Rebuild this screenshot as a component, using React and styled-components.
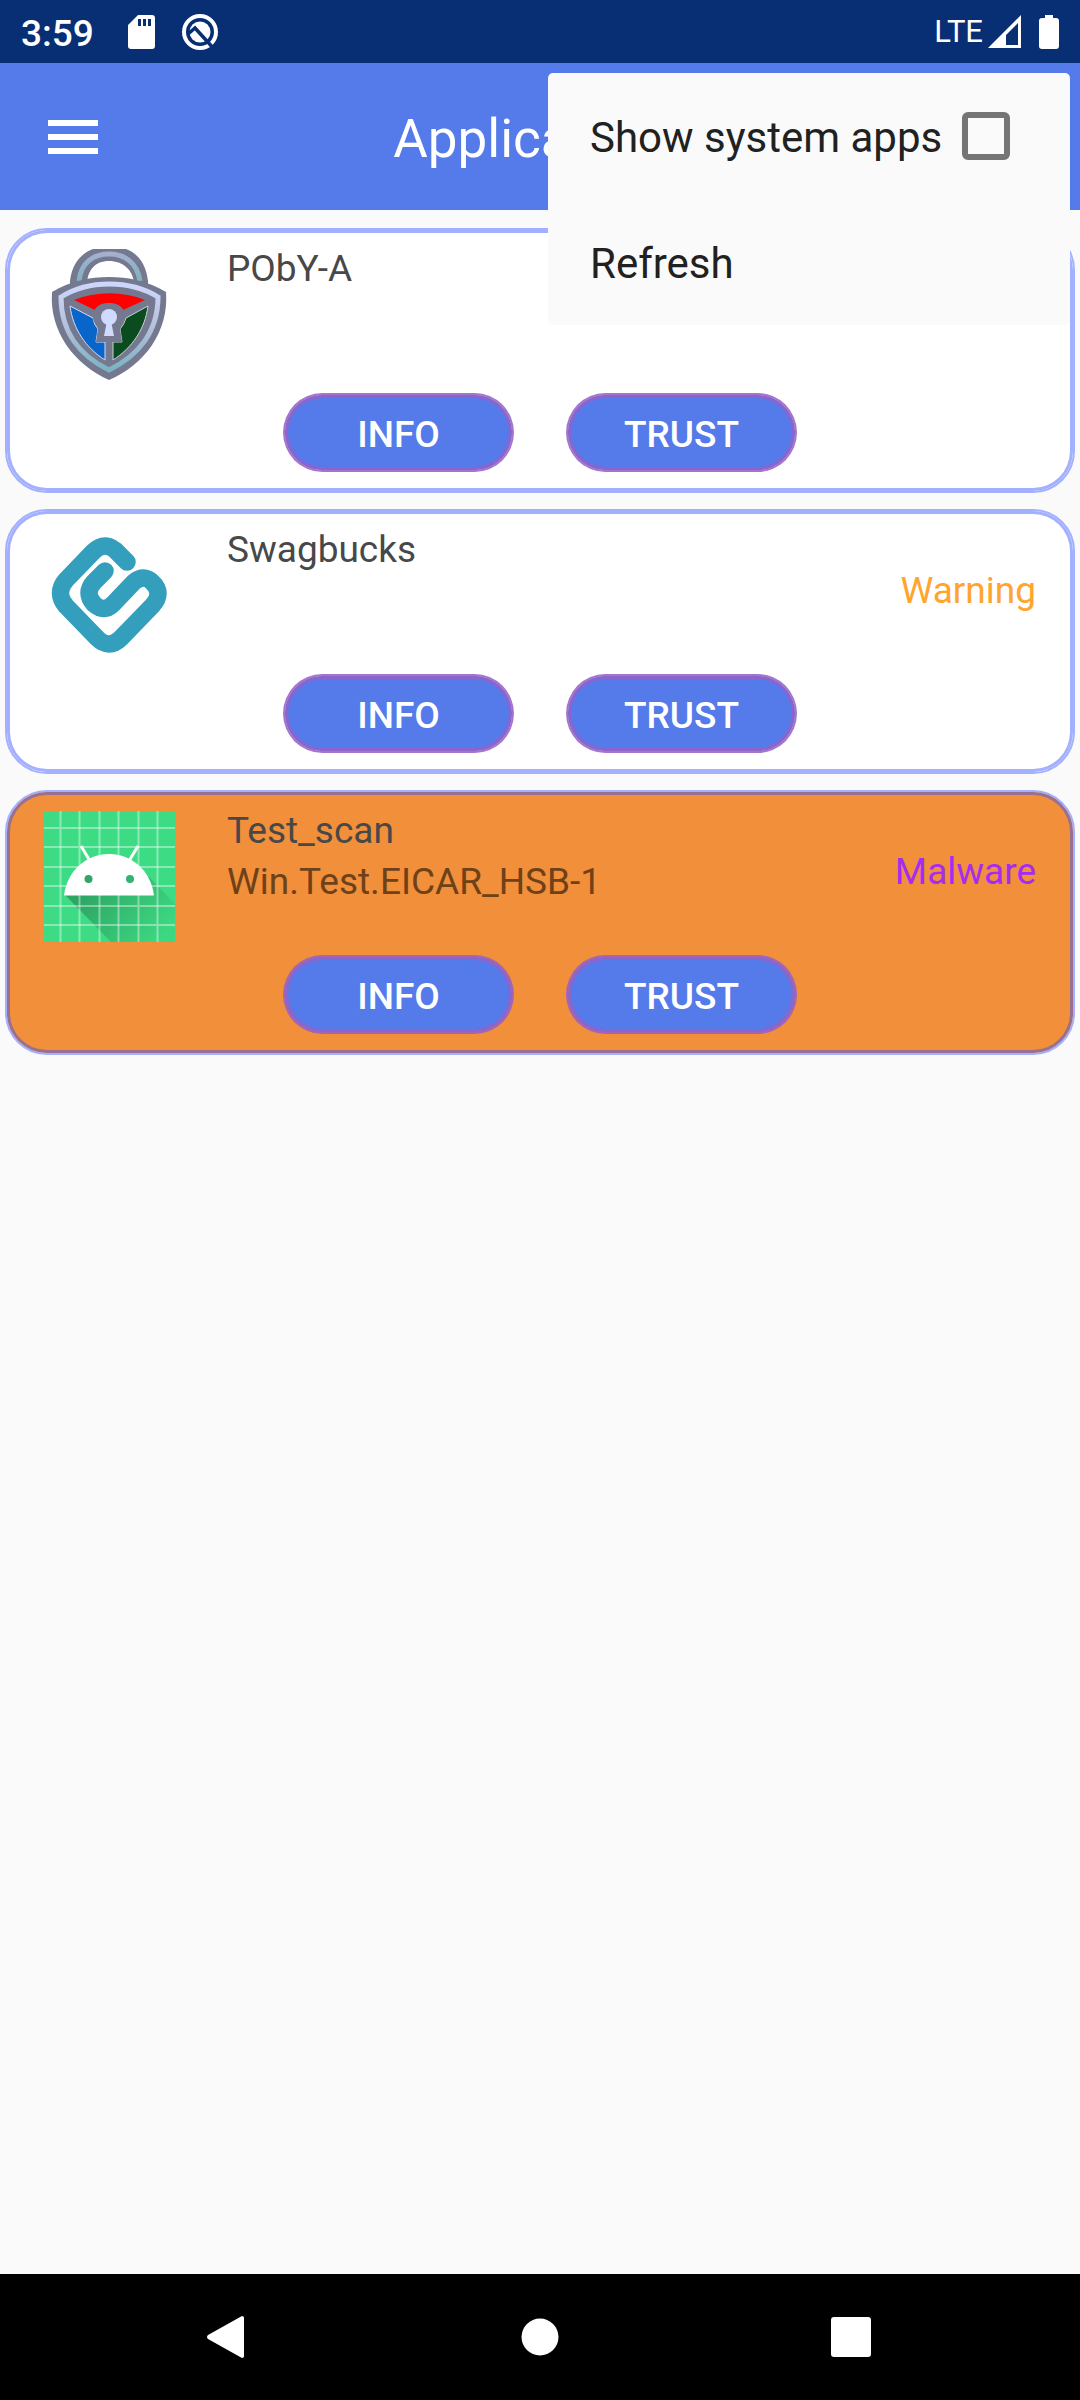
import React from "react";
import styled, { createGlobalStyle } from "styled-components";

const GlobalStyle = createGlobalStyle`
  *, *::before, *::after { box-sizing: border-box; }
  html { height: 100%; }
  body {
    margin: 0;
    min-height: 100%;
    background: #fafafa;
    font-family: Roboto, "Liberation Sans", sans-serif;
  }
  button { font: inherit; cursor: pointer; }
`;

const Screen = styled.div`
  min-height: 100vh;
  display: flex;
  flex-direction: column;
  background: #fafafa;
`;

const StatusBar = styled.div`
  height: 63px;
  flex: none;
  display: flex;
  align-items: center;
  justify-content: space-between;
  padding: 0 21px;
  background: #082e73;
  color: #fff;
`;

const StatusGroup = styled.div`
  display: flex;
  align-items: center;
  gap: ${(p) => p.$gap}px;
`;

const Clock = styled.span`
  font-size: 37px;
  line-height: 44px;
  font-weight: 500;
  padding-top: 4px;
`;

const Network = styled.span`
  font-size: 31px;
  line-height: 40px;
`;

const Glyph = styled.svg`
  display: block;
  flex: none;
  width: ${(p) => p.$w}px;
  height: ${(p) => p.$h}px;
`;

const AppBar = styled.header`
  position: relative;
  height: 147px;
  flex: none;
  display: grid;
  grid-template-columns: 147px 1fr 147px;
  align-items: center;
  background: #557aea;
  color: #fff;
`;

const MenuButton = styled.button`
  width: 146px;
  height: 146px;
  display: grid;
  place-items: center;
  padding: 0;
  border: 0;
  background: none;
  color: inherit;
`;

const Title = styled.h1`
  margin: 0;
  padding-top: 4px;
  text-align: center;
  font-size: 53px;
  line-height: 64px;
  font-weight: 400;
`;

const Popup = styled.div`
  position: absolute;
  z-index: 2;
  top: 10px;
  right: 10px;
  width: 522px;
  border-radius: 5px;
  background: #fafafa;
  color: #212121;
`;

const popupItem = `
  width: 100%;
  height: 126px;
  display: flex;
  align-items: center;
  justify-content: space-between;
  padding: 0 60px 0 42px;
  border: 0;
  background: none;
  color: inherit;
  font-size: 42px;
  line-height: 50px;
  text-align: left;
`;

const PopupLabel = styled.label`${popupItem}`;
const PopupButton = styled.button`
  && { ${popupItem} }
`;

const PopupText = styled.span`
  padding-top: 4px;
`;

const CheckBox = styled.input`
  appearance: none;
  width: 48px;
  height: 48px;
  margin: 0;
  border: 6px solid #757575;
  border-radius: 6px;
  &:checked { background: #757575; }
`;

const List = styled.main`
  flex: 1;
  display: flex;
  flex-direction: column;
  gap: 16px;
  padding: 18px 5px;
`;

const Card = styled.article`
  height: 265px;
  display: flex;
  flex-direction: column;
  justify-content: flex-end;
  gap: 13px;
  padding: 0 37px 19px;
  border: 2px solid #a3b0ff;
  border-radius: 42px;
  box-shadow: inset 0 0 0 3px ${(p) => (p.$infected ? "#99708f" : "#a3b0ff")};
  background: ${(p) => (p.$infected ? "#f18f3a" : "#fff")};
`;

const CardTop = styled.div`
  height: 133px;
  display: flex;
  align-items: flex-start;
`;

const AppIcon = styled.svg`
  display: block;
  flex: none;
  width: 131px;
  height: 131px;
  margin: 2px 52px 0 0;
`;

const AppText = styled.div`
  flex: 1;
  display: flex;
  flex-direction: column;
  gap: 8px;
`;

const AppName = styled.h2`
  margin: 0;
  font-size: 37px;
  line-height: 43px;
  font-weight: 400;
  color: #484848;
`;

const Threat = styled.p`
  margin: 0;
  font-size: 37px;
  line-height: 43px;
  color: #6e4119;
`;

const Verdict = styled.span`
  padding-top: 41px;
  font-size: 37px;
  line-height: 43px;
  color: ${(p) => p.$color};
`;

const Actions = styled.div`
  display: flex;
  justify-content: center;
  gap: 52px;
`;

const Action = styled.button`
  width: 231px;
  height: 79px;
  padding: 4px 0 0;
  border: 2px solid rgba(148, 97, 199, 0.87);
  border-radius: 40px;
  background: #557aea;
  background-clip: padding-box;
  box-shadow: inset 0 0 0 3px rgba(148, 97, 199, 0.87);
  color: #fff;
  && { font-size: 37px; line-height: 43px; font-weight: 500; }
`;

const NavBar = styled.nav`
  height: 126px;
  flex: none;
  display: flex;
  align-items: center;
  justify-content: center;
  gap: 185px;
  background: #000;
`;

const NavButton = styled.button`
  width: 126px;
  height: 126px;
  display: grid;
  place-items: center;
  padding: 0;
  border: 0;
  background: none;
`;

function ShieldIcon() {
  return (
    <AppIcon viewBox="0 0 131 131" aria-hidden="true">
      <defs>
        <linearGradient id="steel" x1="0" y1="0" x2="0" y2="1">
          <stop offset="0" stopColor="#ced7fb" />
          <stop offset="0.5" stopColor="#b4c0dc" />
          <stop offset="1" stopColor="#7cb3c0" />
        </linearGradient>
        <linearGradient id="hoop" x1="0" y1="0" x2="0" y2="1">
          <stop offset="0" stopColor="#a4b0ce" />
          <stop offset="1" stopColor="#80b2bf" />
        </linearGradient>
      </defs>
      <path d="M26 37V32C28 14 38 4 49 0H82C93 4 102 14 104 32V37L90 34C89 21 79 12 65 12S44 21 43 34Z" fill="#747990" />
      <path d="M35 32C37 13 50 5 65 5S93 13 96 32" fill="none" stroke="url(#hoop)" strokeWidth="5" />
      <path d="M44 30C46 19 53 13 65 13S85 19 87 30Q65 26 44 30Z" fill="#fff" />
      <path d="M8 43C26 32 46 28 65 28S104 32 122 43C125 83 100 116 65 131C31 116 5 83 8 43Z" fill="#747990" />
      <path d="M17 48C33 38 49 35 65 35S98 38 114 48C114 83 94 107 65 121C36 107 17 83 17 48Z" fill="none" stroke="url(#steel)" strokeWidth="5" />
      <path d="M30 51C52 42 79 42 101 51L79 61C73 53 57 53 51 61Z" fill="#f00" />
      <path d="M26 57L49 69Q50 76 54 80L52 93H61V111C42 99 29 80 26 57Z" fill="#0865ca" stroke="#d5dcf5" strokeWidth="1" />
      <path d="M104 57L82 69Q80 76 76 80L78 93H69V111C88 99 101 80 104 57Z" fill="#0a4b20" stroke="#c5d5cc" strokeWidth="1" />
      <path d="M65 54C54 54 49 60 49 68C49 74 53 75 54 80L52 93H78L76 80C78 75 81 74 81 68C81 60 76 54 65 54Z" fill="#747990" />
      <circle cx="65" cy="68" r="8" fill="#d0dafe" />
      <path d="M63 72H67L70 87H60Z" fill="#d0dafe" />
    </AppIcon>
  );
}

function SwagIcon() {
  return (
    <AppIcon viewBox="0 0 131 131" aria-hidden="true">
      <path
        d="M83 32L75 24Q62 9 49 22L22 50Q11 63 22 76L53 108Q65 120 77 108L108 76Q120 63 108 52Q100 44 90 52L69 74Q60 83 50 74Q40 63 50 52L61 41"
        fill="none"
        stroke="#349fbc"
        strokeWidth="17.500"
        strokeLinecap="round"
        strokeLinejoin="round"
      />
    </AppIcon>
  );
}

function AndroidIcon() {
  const lines = [17, 36, 56, 75, 95, 114];
  return (
    <AppIcon viewBox="0 0 131 131" aria-hidden="true">
      <defs>
        <linearGradient id="shade" gradientUnits="userSpaceOnUse" x1="40" y1="80" x2="110" y2="135">
          <stop offset="0" stopColor="#000" stopOpacity="0.25" />
          <stop offset="1" stopColor="#000" stopOpacity="0.02" />
        </linearGradient>
      </defs>
      <rect width="131" height="131" fill="#3ddc84" />
      <path d="M21 84L67 131H131V93L105 66Z" fill="url(#shade)" />
      {lines.map((n) => (
        <path key={n} d={`M${n - 0.5} 0V131M0 ${n}H131`} stroke="#fff" strokeOpacity="0.4" strokeWidth="2" />
      ))}
      <path d="M37 35L46 50M94 35L85 50" stroke="#fff" strokeWidth="3" />
      <path d="M20 84.500C23 60 42 43 65 43S107 60 110 84.500Z" fill="#fff" />
      <circle cx="44.500" cy="68" r="4" fill="#2fa866" />
      <circle cx="86" cy="68" r="4" fill="#33b36d" />
    </AppIcon>
  );
}

const apps = [
  { name: "PObY-A", Icon: ShieldIcon },
  { name: "Swagbucks", Icon: SwagIcon, verdict: "Warning", color: "#ffa52d" },
  {
    name: "Test_scan",
    Icon: AndroidIcon,
    threat: "Win.Test.EICAR_HSB-1",
    verdict: "Malware",
    color: "#a52cf0",
    infected: true,
  },
];

function AppCard({ app }) {
  const { Icon } = app;
  return (
    <Card $infected={app.infected}>
      <CardTop>
        <Icon />
        <AppText>
          <AppName>{app.name}</AppName>
          {app.threat && <Threat>{app.threat}</Threat>}
        </AppText>
        {app.verdict && <Verdict $color={app.color}>{app.verdict}</Verdict>}
      </CardTop>
      <Actions>
        <Action type="button">INFO</Action>
        <Action type="button">TRUST</Action>
      </Actions>
    </Card>
  );
}

export default function App() {
  return (
    <Screen>
      <GlobalStyle />
      <StatusBar>
        <StatusGroup $gap={34}>
          <Clock>3:59</Clock>
          <StatusGroup $gap={26}>
            <Glyph $w={27} $h={34} viewBox="0 0 27 34" aria-hidden="true">
              <path fillRule="evenodd" d="M10 0H24Q27 0 27 3V31Q27 34 24 34H3Q0 34 0 31V10ZM10 4V11H13V4ZM15 4V11H18V4ZM20 4V11H23V4Z" fill="#fff" />
            </Glyph>
            <Glyph $w={38} $h={38} viewBox="0 0 38 38" aria-hidden="true">
              <circle cx="19" cy="19" r="16" fill="none" stroke="#fff" strokeWidth="4" />
              <circle cx="19" cy="19" r="10.500" fill="#fff" />
              <path d="M7 21L14 15L34 37" fill="none" stroke="#082e73" strokeWidth="3.500" />
            </Glyph>
          </StatusGroup>
        </StatusGroup>
        <StatusGroup $gap={18}>
          <StatusGroup $gap={5}>
            <Network>LTE</Network>
            <Glyph $w={33} $h={33} viewBox="0 0 33 33" aria-hidden="true">
              <path fillRule="evenodd" d="M33 0V33H0ZM30 8L18 20V30H30Z" fill="#fff" />
            </Glyph>
          </StatusGroup>
          <Glyph $w={20} $h={34} viewBox="0 0 20 34" aria-hidden="true">
            <path d="M6 0H14V3H17Q20 3 20 6V31Q20 34 17 34H3Q0 34 0 31V6Q0 3 3 3H6Z" fill="#fff" />
          </Glyph>
        </StatusGroup>
      </StatusBar>

      <AppBar>
        <MenuButton type="button" aria-label="Open navigation">
          <Glyph $w={50} $h={34} viewBox="0 0 50 34" aria-hidden="true">
            <path d="M0 3H50M0 17H50M0 31H50" stroke="#fff" strokeWidth="6" />
          </Glyph>
        </MenuButton>
        <Title>Applications</Title>
        <Popup>
          <PopupLabel htmlFor="system-apps">
            <PopupText>Show system apps</PopupText>
            <CheckBox id="system-apps" type="checkbox" />
          </PopupLabel>
          <PopupButton type="button">
            <PopupText>Refresh</PopupText>
          </PopupButton>
        </Popup>
      </AppBar>

      <List>
        {apps.map((app) => (
          <AppCard key={app.name} app={app} />
        ))}
      </List>

      <NavBar>
        <NavButton type="button" aria-label="Back">
          <Glyph $w={46} $h={42} viewBox="0 0 46 42" aria-hidden="true">
            <path d="M36 0Q38 0 38 2V40Q38 42 36 42L2 23Q0 21 2 19Z" fill="#fff" />
          </Glyph>
        </NavButton>
        <NavButton type="button" aria-label="Home">
          <Glyph $w={38} $h={38} viewBox="0 0 38 38" aria-hidden="true">
            <circle cx="19" cy="19" r="18.500" fill="#fff" />
          </Glyph>
        </NavButton>
        <NavButton type="button" aria-label="Recent apps">
          <Glyph $w={40} $h={40} viewBox="0 0 40 40" aria-hidden="true">
            <rect width="40" height="40" rx="3" fill="#fff" />
          </Glyph>
        </NavButton>
      </NavBar>
    </Screen>
  );
}
